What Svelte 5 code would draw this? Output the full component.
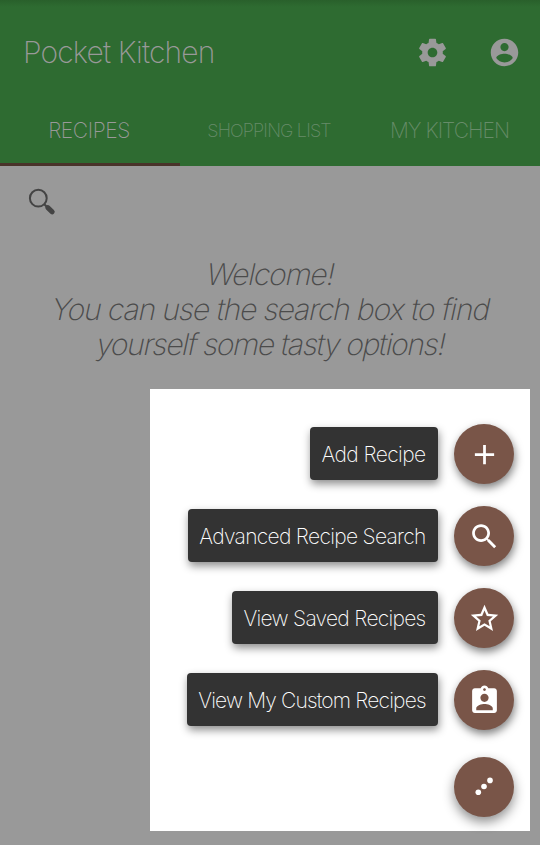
<script>
  const actions = [
    { label: 'Add Recipe', icon: 'add', width: 128, spacing: -0.58 },
    { label: 'Advanced Recipe Search', icon: 'search', width: 250, spacing: -0.7 },
    { label: 'View Saved Recipes', icon: 'star', width: 206, spacing: -0.72 },
    { label: 'View My Custom Recipes', icon: 'badge', width: 251, spacing: -0.84 },
  ];
  const icons = {
    add: 'M19 13h-6v6h-2v-6H5v-2h6V5h2v6h6v2z',
    search: 'M15.5 14h-.79l-.28-.27C15.41 12.59 16 11.11 16 9.5 16 5.91 13.09 3 9.5 3S3 5.91 3 9.5 5.91 16 9.5 16c1.61 0 3.09-.59 4.23-1.57l.27.28v.79l5 4.99L20.49 19l-4.99-5zm-6 0C7.01 14 5 11.99 5 9.5S7.01 5 9.5 5 14 7.01 14 9.5 11.99 14 9.5 14z',
    star: 'M22 9.24l-7.19-.62L12 2 9.19 8.63 2 9.24l5.46 4.73L5.82 21 12 17.27 18.18 21l-1.63-7.03L22 9.24zM12 15.4l-3.76 2.27 1-4.28-3.32-2.88 4.38-.38L12 6.1l1.71 4.04 4.38.38-3.32 2.88 1 4.28L12 15.4z',
    badge: 'M19 3h-4.18C14.4 1.84 13.3 1 12 1c-1.3 0-2.4.84-2.82 2H5c-1.1 0-2 .9-2 2v14c0 1.1.9 2 2 2h14c1.1 0 2-.9 2-2V5c0-1.1-.9-2-2-2zm-7 0c.55 0 1 .45 1 1s-.45 1-1 1-1-.45-1-1 .45-1 1-1zm0 4c1.66 0 3 1.34 3 3s-1.34 3-3 3-3-1.34-3-3 1.34-3 3-3zm6 12H6v-1.4c0-2 4-3.1 6-3.1s6 1.1 6 3.1V19z',
    settings: 'M19.43 12.98c.04-.32.07-.64.07-.98s-.03-.66-.07-.98l2.11-1.65c.19-.15.24-.42.12-.64l-2-3.46c-.12-.22-.39-.3-.61-.22l-2.49 1c-.52-.4-1.08-.73-1.69-.98l-.38-2.65C14.46 2.18 14.25 2 14 2h-4c-.25 0-.46.18-.49.42l-.38 2.65c-.61.25-1.17.59-1.69.98l-2.49-1c-.23-.09-.49 0-.61.22l-2 3.46c-.13.22-.07.49.12.64l2.11 1.65c-.04.32-.07.65-.07.98s.03.66.07.98l-2.11 1.65c-.19.15-.24.42-.12.64l2 3.46c.12.22.39.3.61.22l2.49-1c.52.4 1.08.73 1.69.98l.38 2.65c.03.24.24.42.49.42h4c.25 0 .46-.18.49-.42l.38-2.65c.61-.25 1.17-.59 1.69-.98l2.49 1c.23.09.49 0 .61-.22l2-3.46c.12-.22.07-.49-.12-.64l-2.11-1.65zM12 15.5c-1.93 0-3.5-1.57-3.5-3.5s1.57-3.5 3.5-3.5 3.5 1.57 3.5 3.5-1.57 3.5-3.5 3.5z',
    account: 'M12 2C6.48 2 2 6.48 2 12s4.48 10 10 10 10-4.48 10-10S17.52 2 12 2zm0 3c1.66 0 3 1.34 3 3s-1.34 3-3 3-3-1.34-3-3 1.34-3 3-3zm0 14.2c-2.5 0-4.71-1.28-6-3.22.03-1.99 4-3.08 6-3.08 1.99 0 5.97 1.09 6 3.08-1.29 1.94-3.5 3.22-6 3.22z',
  };
</script>

{#snippet icon(name)}
  <svg class="icon" viewBox="0 0 24 24"><path d={icons[name]} /></svg>
{/snippet}

<div class="app">
  <header>
    <div class="bar">
      <h1>Pocket Kitchen</h1>
      <div class="tools">{@render icon('settings')}{@render icon('account')}</div>
    </div>
    <nav>
      <div class="tab active"><span>RECIPES</span></div>
      <div class="tab small"><span>SHOPPING LIST</span></div>
      <div class="tab"><span>MY KITCHEN</span></div>
    </nav>
  </header>

  <main>
    <svg class="lens" viewBox="0 0 30 30">
      <circle cx="11.3" cy="11.2" r="8.4" />
      <path class="neck" d="M17.3 17.2l3 3" />
      <path class="handle" d="M20.8 20.7l4.4 4.1" />
    </svg>
    <p>
      <span class="l1">Welcome!</span>
      <span class="l2">You can use the search box to find</span>
      <span class="l3">yourself some tasty options!</span>
    </p>
  </main>

  <section class="menu">
    {#each actions as a}
      <div class="row">
        <div class="label" style="width:{a.width}px; letter-spacing:{a.spacing}px"><span>{a.label}</span></div>
        <button class="fab" aria-label={a.label}>{@render icon(a.icon)}</button>
      </div>
    {/each}
    <button class="fab toggle" aria-label="Close menu">
      <svg class="dots" viewBox="0 0 20 20">
        <circle cx="4.3" cy="15.2" r="2.8" /><circle cx="10" cy="9.5" r="2.8" /><circle cx="16" cy="3.4" r="2.8" />
      </svg>
    </button>
  </section>
</div>

<style>
  :global(body) { margin: 0; }
  .app {
    position: relative;
    width: 540px;
    height: 845px;
    overflow: hidden;
    background: #999;
    font-family: Inter, 'Liberation Sans', sans-serif;
    font-weight: 200;
    white-space: nowrap;
  }
  header {
    height: 166px;
    background: linear-gradient(#29602b, #2e6b31 7px);
    color: #999;
  }
  .bar {
    display: flex;
    align-items: center;
    justify-content: space-between;
    height: 105px;
    box-sizing: border-box;
    padding: 0 19px 0 23px;
  }
  h1 { margin: 0; padding-bottom: 2px; font-size: 30px; font-weight: inherit; letter-spacing: -0.85px; }
  .tools { display: flex; gap: 39px; }
  .icon { display: block; width: 33px; height: 33px; fill: currentColor; flex: none; }
  nav { display: flex; height: 61px; }
  .tab {
    display: flex;
    justify-content: center;
    flex: 0 0 180px;
    box-sizing: border-box;
    padding: 13px 1px 0 0;
    font-size: 21px;
    line-height: 26px;
    color: #678c69;
    letter-spacing: -0.95px;
  }
  .active { color: #999; border-bottom: 3px solid #49332a; padding-right: 2px; letter-spacing: -0.4px; }
  .small { padding-right: 2px; font-size: 18px; letter-spacing: -0.83px; }
  main { height: 679px; }
  .lens { display: block; width: 30px; height: 30px; margin-left: 27px; padding-top: 21px; fill: none; stroke: #444; }
  .lens circle { stroke-width: 2; }
  .neck { stroke-width: 2; }
  .handle { stroke-width: 5; stroke-linecap: round; }
  p {
    margin: 40px 0 0;
    display: flex;
    flex-direction: column;
    align-items: center;
    font-size: 30px;
    line-height: 35px;
    color: #4b4b4b;
    letter-spacing: -1.15px;
  }
  p span { transform: skewX(-12deg); }
  .l1, .l2 { padding-left: 2px; }
  .l2 { letter-spacing: -1.09px; }
  .l3 { padding-left: 2px; letter-spacing: -1.32px; }
  .menu {
    position: absolute;
    left: 150px;
    top: 389px;
    width: 380px;
    height: 442px;
    box-sizing: border-box;
    padding: 35px 16px 0 0;
    background: #fff;
    display: flex;
    flex-direction: column;
    align-items: flex-end;
    gap: 22px;
  }
  .row { display: flex; align-items: center; gap: 16px; height: 60px; }
  .label {
    height: 53px;
    box-sizing: border-box;
    margin-bottom: 1px;
    padding: 1px 1px 0 0;
    display: flex;
    align-items: center;
    justify-content: center;
    border-radius: 4px;
    background: #333;
    color: #fff;
    font-size: 21px;
    box-shadow: 1px 4px 8px rgba(0, 0, 0, 0.45);
  }
  .fab {
    display: flex;
    align-items: center;
    justify-content: center;
    width: 60px;
    height: 60px;
    padding: 1px 0 0 1px;
    border: 0;
    border-radius: 50%;
    background: #795548;
    color: #fff;
    box-shadow: 1px 4px 9px rgba(0, 0, 0, 0.5);
  }
  .toggle { margin-top: 5px; padding: 0; box-shadow: 0 5px 12px rgba(0, 0, 0, 0.45); }
  .dots { width: 20px; height: 20px; fill: #fff; }
</style>
